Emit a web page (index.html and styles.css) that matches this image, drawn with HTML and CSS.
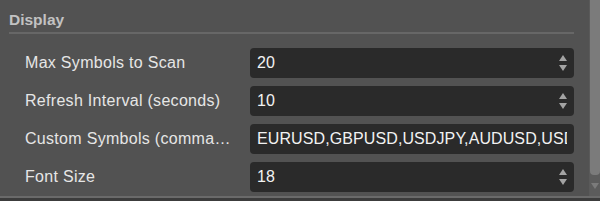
FILE: index.html
```html
<!DOCTYPE html>
<html lang="en">
<head>
    <meta charset="UTF-8">
    <meta name="viewport" content="width=device-width, initial-scale=1.0">
    <title>Display Settings</title>
    <link rel="stylesheet" href="styles.css">
</head>
<body>
    <div class="window">
        <div class="panel">
            <div class="section-title">Display</div>
            <div class="fields">
                <div class="field">
                    <label class="label">Max Symbols to Scan</label>
                    <div class="input">
                        <span class="value">20</span>
                        <span class="spinner"><i class="up"></i><i class="down"></i></span>
                    </div>
                </div>
                <div class="field">
                    <label class="label">Refresh Interval (seconds)</label>
                    <div class="input">
                        <span class="value">10</span>
                        <span class="spinner"><i class="up"></i><i class="down"></i></span>
                    </div>
                </div>
                <div class="field">
                    <label class="label">Custom Symbols (comma-separated)</label>
                    <div class="input">
                        <span class="value text">EURUSD,GBPUSD,USDJPY,AUDUSD,USDCAD,NZDUSD</span>
                    </div>
                </div>
                <div class="field">
                    <label class="label">Font Size</label>
                    <div class="input">
                        <span class="value">18</span>
                        <span class="spinner"><i class="up"></i><i class="down"></i></span>
                    </div>
                </div>
            </div>
        </div>
        <div class="scrollbar">
            <div class="thumb"></div>
            <div class="arrow-down"></div>
        </div>
    </div>
</body>
</html>
```

FILE: styles.css
```css
body {
    margin: 0;
    background-color: #3c3c3c;
    font-family: "Liberation Sans", Arial, sans-serif;
}
.window {
    display: flex;
    width: 600px;
    height: 196px;
    background-color: #525252;
    border-bottom: 2px solid #6a6a6a;
    overflow: hidden;
}
.panel {
    flex: 1;
    min-width: 0;
    padding: 0 15px 0 9px;
}
.section-title {
    height: 32px;
    line-height: 39px;
    font-size: 15.5px;
    font-weight: bold;
    color: #c2c2c2;
    border-bottom: 2px solid #676767;
}
.fields {
    display: flex;
    flex-direction: column;
    gap: 8px;
    padding: 14px 0 0 16px;
}
.field {
    display: flex;
    align-items: center;
}
.label {
    flex: 0 0 auto;
    box-sizing: border-box;
    width: 225px;
    padding-right: 15px;
    font-size: 16px;
    letter-spacing: 0.3px;
    color: #e6e6e6;
    white-space: nowrap;
    overflow: hidden;
    text-overflow: ellipsis;
}
.input {
    flex: 1;
    min-width: 0;
    height: 30px;
    display: flex;
    align-items: center;
    background-color: #2a2a2a;
    border-radius: 4px;
    padding: 0 7px;
    overflow: hidden;
}
.value {
    flex: 1;
    min-width: 0;
    font-size: 16px;
    letter-spacing: 0.1px;
    color: #f2f2f2;
    white-space: nowrap;
    overflow: hidden;
}
.spinner {
    display: flex;
    flex-direction: column;
    gap: 4px;
}
.spinner i {
    width: 0;
    height: 0;
    border-left: 4px solid transparent;
    border-right: 4px solid transparent;
}
.spinner .up {
    border-bottom: 6px solid #a3a3a3;
}
.spinner .down {
    border-top: 6px solid #a3a3a3;
}
.scrollbar {
    flex: 0 0 10px;
    display: flex;
    flex-direction: column;
    background-color: #5c5c5c;
    border-left: 1px solid #5a5a5a;
}
.thumb {
    height: 175px;
    background-color: #7b7b7b;
    border-radius: 0 0 4px 4px;
}
.arrow-down {
    margin: 8px auto 0;
    width: 0;
    height: 0;
    border-left: 4px solid transparent;
    border-right: 4px solid transparent;
    border-top: 6px solid #7b7b7b;
}
```
